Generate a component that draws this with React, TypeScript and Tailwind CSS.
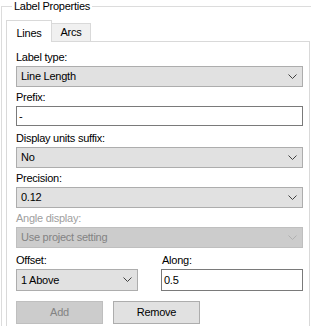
function Chevron({ disabled }: { disabled?: boolean }) {
  return (
    <svg width="9" height="6" viewBox="0 0 9 6" className="shrink-0">
      <path d="M0.5 0.5 L4.5 4.5 L8.5 0.5" fill="none" stroke={disabled ? "#b0b0b0" : "#404040"} strokeWidth="1" />
    </svg>
  );
}

function Select({ value, disabled, className = "" }: { value: string; disabled?: boolean; className?: string }) {
  return (
    <div
      className={`flex h-[21px] items-center justify-between border pl-[4px] pr-[5px] ${
        disabled ? "border-[#bfbfbf] bg-[#cccccc] text-[#838383]" : "border-[#adadad] bg-[#e1e1e1] text-black"
      } ${className}`}
    >
      <span>{value}</span>
      <Chevron disabled={disabled} />
    </div>
  );
}

function Input({ value, className = "" }: { value: string; className?: string }) {
  return (
    <div className={`flex h-[20px] items-center border border-[#7a7a7a] bg-white pl-[2px] ${className}`}>
      {value}
    </div>
  );
}

function Label({ text, disabled, className = "" }: { text: string; disabled?: boolean; className?: string }) {
  return (
    <div className={`h-[13px] leading-[13px] mb-[2px] ${disabled ? "text-[#a0a0a0]" : "text-black"} ${className}`}>{text}</div>
  );
}

export default function App() {
  return (
    <div className="w-[311px] h-[326px] overflow-hidden bg-white text-[11px] tracking-[-0.25px] font-['Liberation_Sans',Arial,sans-serif]">
      <fieldset className="ml-[1px] w-[330px] h-[340px] border border-[#dcdcdc] pl-[4px]">
        <legend className="ml-[6px] px-[2px] leading-[13px] text-black">Label Properties</legend>

        {/* tabs */}
        <div className="flex items-end h-[27px] mt-[1px]">
          <div className="relative z-10 flex h-[22px] w-[46px] items-start justify-center border border-b-0 border-[#d9d9d9] bg-white pt-[4px] mb-[-1px]">
            Lines
          </div>
          <div className="flex h-[18px] w-[39px] items-center justify-center border border-l-0 border-b-0 border-[#d9d9d9] bg-[#f0f0f0]">
            Arcs
          </div>
        </div>

        <div className="w-[304px] h-[300px] border border-[#d9d9d9] bg-white pl-[9px] pr-[6px] pt-[9px]">
          <Label text="Label type:" />
          <Select value="Line Length" />

          <Label text="Prefix:" className="mt-[4px]" />
          <Input value="-" />

          <Label text="Display units suffix:" className="mt-[6px]" />
          <Select value="No" />

          <Label text="Precision:" className="mt-[4px]" />
          <Select value="0.12" />

          <Label text="Angle display:" disabled className="mt-[4px]" />
          <Select value="Use project setting" disabled />

          <div className="mt-[6px] flex gap-[23px]">
            <div className="w-[122px]">
              <Label text="Offset:" />
              <Select value="1 Above" className="h-[22px]" />
            </div>
            <div className="w-[142px]">
              <Label text="Along:" className="pl-[1px]" />
              <Input value="0.5" className="h-[22px]" />
            </div>
          </div>

          <div className="mt-[10px] flex gap-[10px]">
            <div className="flex h-[23px] w-[87px] items-center justify-center border border-[#bfbfbf] bg-[#cccccc] text-[#838383]">
              Add
            </div>
            <div className="flex h-[23px] w-[87px] items-center justify-center border border-[#adadad] bg-[#e1e1e1] text-black">
              Remove
            </div>
          </div>
        </div>
      </fieldset>
    </div>
  );
}
